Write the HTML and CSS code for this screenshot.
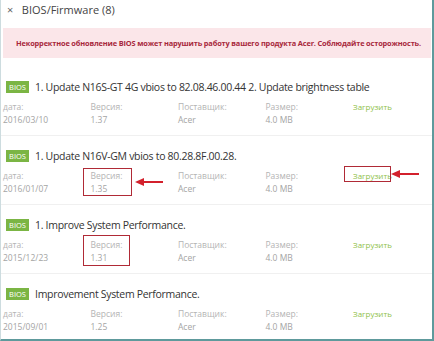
FILE: index.html
```html
<!DOCTYPE html>
<html lang="ru">
<head>
    <meta charset="UTF-8">
    <title>BIOS/Firmware</title>
    <link rel="stylesheet" href="styles.css">
</head>
<body>

    <div class="frame">
        <div class="header">
            <span class="close">&times;</span>
            <span class="header-title">BIOS/Firmware (8)</span>
        </div>

        <div class="warning">
            Некорректное обновление BIOS может нарушить работу вашего продукта Acer. Соблюдайте осторожность.
        </div>

        <div class="list">
            <div class="entry">
                <div class="entry-title">
                    <span class="badge">BIOS</span>
                    1. Update N16S-GT 4G vbios to 82.08.46.00.44 2. Update brightness table
                </div>
                <div class="entry-info">
                    <span class="label">дата:</span>
                    <span class="label">Версия:</span>
                    <span class="label">Поставщик:</span>
                    <span class="label">Размер:</span>
                    <a class="download" href="#">Загрузить</a>
                    <span class="value">2016/03/10</span>
                    <span class="value">1.37</span>
                    <span class="value">Acer</span>
                    <span class="value">4.0 MB</span>
                </div>
            </div>

            <div class="entry">
                <div class="entry-title">
                    <span class="badge">BIOS</span>
                    1. Update N16V-GM vbios to 80.28.8F.00.28.
                </div>
                <div class="entry-info">
                    <span class="label">дата:</span>
                    <span class="label">Версия:</span>
                    <span class="label">Поставщик:</span>
                    <span class="label">Размер:</span>
                    <a class="download" href="#">Загрузить</a>
                    <span class="value">2016/01/07</span>
                    <span class="value">1.35</span>
                    <span class="value">Acer</span>
                    <span class="value">4.0 MB</span>
                </div>
                <div class="mark mark-version"></div>
                <svg class="arrow arrow-version" width="28" height="8" viewBox="0 0 28 8">
                    <path d="M7 4 H28" stroke="#d3202c" stroke-width="2"/>
                    <path d="M0 4 L9 0 L9 8 Z" fill="#d3202c"/>
                </svg>
                <div class="mark mark-download"></div>
                <svg class="arrow arrow-download" width="28" height="8" viewBox="0 0 28 8">
                    <path d="M7 4 H28" stroke="#d3202c" stroke-width="2"/>
                    <path d="M0 4 L9 0 L9 8 Z" fill="#d3202c"/>
                </svg>
            </div>

            <div class="entry">
                <div class="entry-title">
                    <span class="badge">BIOS</span>
                    1. Improve System Performance.
                </div>
                <div class="entry-info">
                    <span class="label">дата:</span>
                    <span class="label">Версия:</span>
                    <span class="label">Поставщик:</span>
                    <span class="label">Размер:</span>
                    <a class="download" href="#">Загрузить</a>
                    <span class="value">2015/12/23</span>
                    <span class="value">1.31</span>
                    <span class="value">Acer</span>
                    <span class="value">4.0 MB</span>
                </div>
                <div class="mark mark-version-tall"></div>
            </div>

            <div class="entry">
                <div class="entry-title">
                    <span class="badge">BIOS</span>
                    Improvement System Performance.
                </div>
                <div class="entry-info">
                    <span class="label">дата:</span>
                    <span class="label">Версия:</span>
                    <span class="label">Поставщик:</span>
                    <span class="label">Размер:</span>
                    <a class="download" href="#">Загрузить</a>
                    <span class="value">2015/09/01</span>
                    <span class="value">1.25</span>
                    <span class="value">Acer</span>
                    <span class="value">4.0 MB</span>
                </div>
            </div>
        </div>
    </div>

</body>
</html>
```

FILE: styles.css
```css
body {
    margin: 0;
    padding: 0;
    font-family: "Open Sans", "DejaVu Sans", sans-serif;
    background-color: #ffffff;
}

.frame {
    width: 434px;
    height: 341px;
    box-sizing: border-box;
    overflow: hidden;
    border-left: 1px solid #cddcdf;
    border-right: 2px solid #5e9a9c;
    border-bottom: 2px solid #5e9a9c;
}

.header {
    height: 28px;
    box-sizing: border-box;
    padding: 2px 0 0 6px;
    font-size: 11px;
    line-height: 16px;
    color: #444;
}

.close {
    display: inline-block;
    width: 12px;
    color: #666;
}

.warning {
    margin: 0 1px 0 2px;
    height: 30px;
    padding-left: 13px;
    display: flex;
    align-items: center;
    background-color: #fbe6e9;
    color: #a8283c;
    font-size: 7.4px;
    letter-spacing: -0.15px;
    font-weight: bold;
    white-space: nowrap;
}

.list {
    margin-top: 9px;
}

.entry {
    position: relative;
    padding: 13px 0 9px;
    border-bottom: 1px solid #f0f0f0;
}

.entry-title {
    display: flex;
    align-items: center;
    height: 14px;
    padding-left: 5px;
    font-size: 10.5px;
    letter-spacing: -0.3px;
    color: #333;
    white-space: nowrap;
}

.badge {
    display: inline-block;
    width: 23px;
    height: 12px;
    line-height: 12px;
    margin-right: 6px;
    background-color: #7bb544;
    color: #fff;
    font-size: 7.5px;
    letter-spacing: 0;
    text-align: center;
}

.entry-info {
    display: grid;
    grid-template-columns: repeat(5, 87.5px);
    grid-auto-rows: 13px;
    margin-top: 6px;
    padding-left: 2px;
    font-size: 8.5px;
    line-height: 13px;
}

.label {
    color: #b4b4b4;
}

.value {
    color: #a4a4a4;
}

.download {
    color: #8fbf4a;
    text-decoration: none;
    font-size: 8px;
}

.mark {
    position: absolute;
    border: 1.5px solid #b02a36;
}

.mark-version {
    top: 32px;
    left: 82px;
    width: 47px;
    height: 26px;
}

.mark-version-tall {
    top: 30px;
    left: 82px;
    width: 45px;
    height: 29px;
}

.mark-download {
    top: 30px;
    left: 343px;
    width: 45px;
    height: 14px;
}

.arrow {
    position: absolute;
}

.arrow-version {
    top: 42px;
    left: 134px;
}

.arrow-download {
    top: 34px;
    left: 390px;
}
```
